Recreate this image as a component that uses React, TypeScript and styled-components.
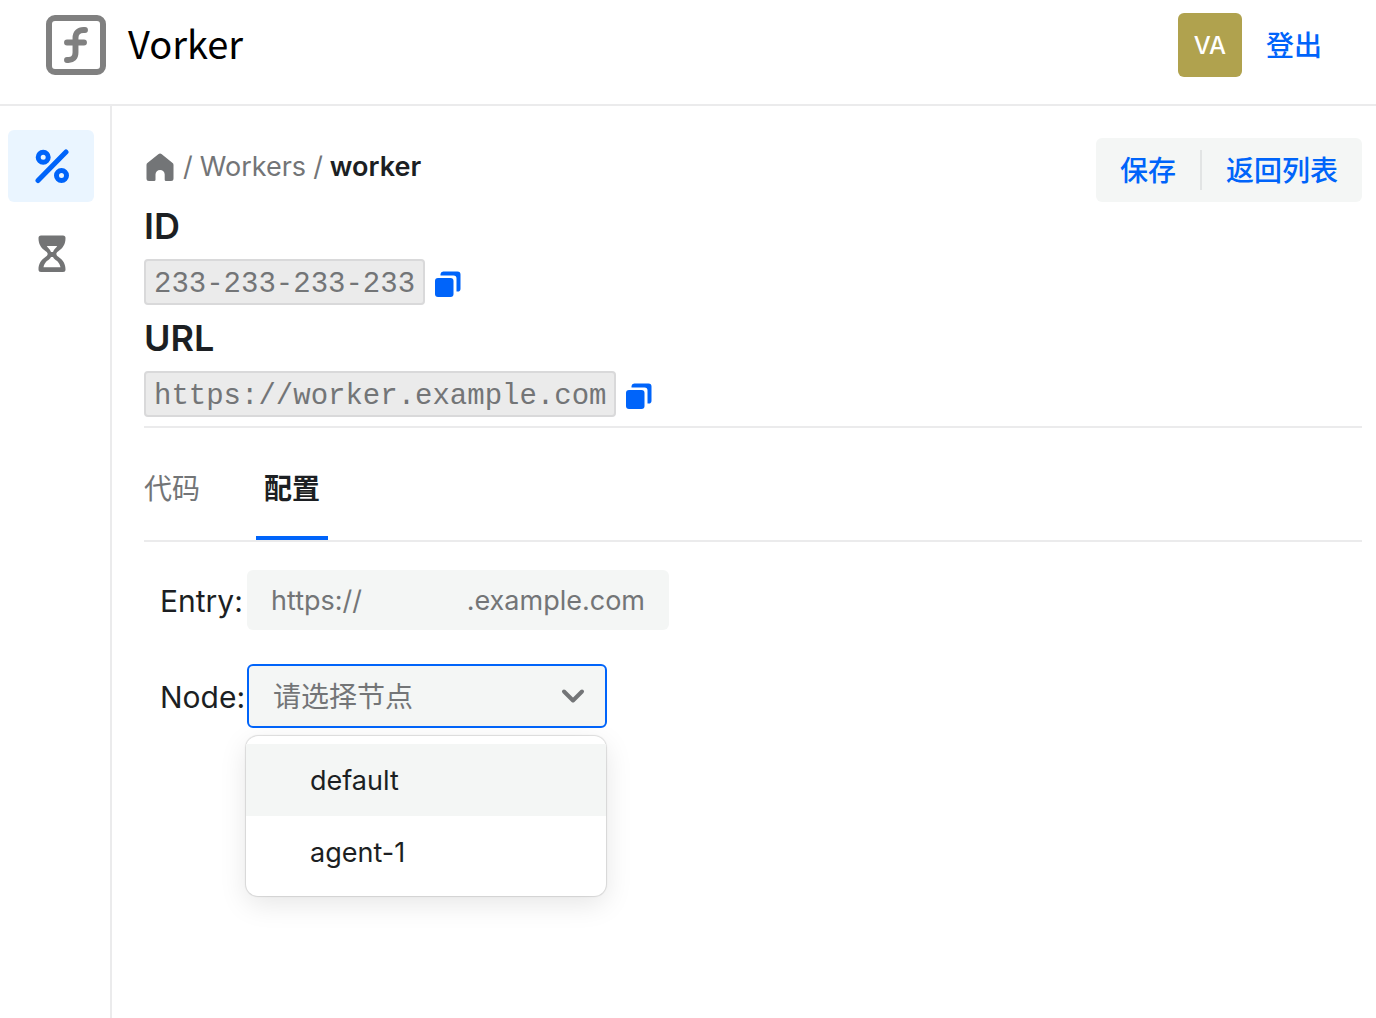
import React, { useState } from "react";
import styled, { createGlobalStyle } from "styled-components";

const color = {
  primary: "#0064fa",
  primarySoft: "#eaf5ff",
  text: "#1c1f23",
  muted: "#737577",
  line: "#ebebec",
  fill: "#f4f6f5",
};

const GlobalStyle = createGlobalStyle`
  * { box-sizing: border-box; }
  body {
    margin: 0;
    background: #fff;
    color: ${color.text};
    font-family: Inter, "Noto Sans CJK SC", sans-serif;
    font-size: 27px;
    line-height: 40px;
  }
  button, input, select { font: inherit; color: inherit; }
  a { color: inherit; text-decoration: none; }
`;

const Page = styled.div`
  display: flex;
  flex-direction: column;
  min-height: 100vh;
`;

const Header = styled.header`
  display: flex;
  align-items: center;
  justify-content: space-between;
  padding: 13px 54px 27px 46px;
  border-bottom: 2px solid ${color.line};
`;

const Brand = styled.a`
  display: flex;
  align-items: center;
  gap: 22px;
  color: #000;
`;

const BrandName = styled.span`
  padding-bottom: 4px;
  font-family: "Noto Sans CJK SC", sans-serif;
  font-size: 38px;
  line-height: 56px;
`;

const Account = styled.div`
  display: flex;
  align-items: center;
  gap: 24px;
`;

const Avatar = styled.span`
  display: grid;
  place-items: center;
  width: 64px;
  height: 64px;
  padding-top: 2px;
  border-radius: 6px;
  background: #b0a24e;
  color: #fff;
  font-size: 24px;
  font-weight: 500;
`;

const TextButton = styled.button<{ $inset?: number }>`
  padding: 13px ${(p) => p.$inset ?? 0}px 11px;
  border: 0;
  background: none;
  color: ${color.primary};
  font-size: 28px;
  font-weight: 500;
  cursor: pointer;
`;

const Body = styled.div`
  display: flex;
  flex: 1;
`;

const Sidebar = styled.nav`
  display: flex;
  flex-direction: column;
  gap: 16px;
  flex: 0 0 112px;
  padding: 24px 16px 24px 8px;
  border-right: 2px solid ${color.line};
`;

const SideLink = styled.a<{ $active?: boolean }>`
  display: grid;
  place-items: center;
  height: 72px;
  padding-left: 2px;
  border-radius: 6px;
  background: ${(p) => (p.$active ? color.primarySoft : "transparent")};
  color: ${(p) => (p.$active ? color.primary : "#737475")};
`;

const Main = styled.main`
  flex: 1;
  min-width: 0;
  padding: 32px 14px 32px 32px;
`;

const TopRow = styled.div`
  display: flex;
  justify-content: space-between;
  height: 64px;
`;

const Breadcrumb = styled.nav`
  display: flex;
  align-items: center;
  gap: 7px;
  height: 58px;
  color: ${color.muted};

  a { display: flex; }
  strong { color: ${color.text}; font-weight: 600; }
`;

const ButtonGroup = styled.div`
  display: flex;
  align-items: center;
  border-radius: 6px;
  background: ${color.fill};
`;

const GroupDivider = styled.span`
  width: 2px;
  height: 40px;
  background: #e2e4e4;
`;

const FieldTitle = styled.h2`
  margin: 0;
  font-size: 36px;
  line-height: 48px;
  font-weight: 600;
`;

const CodeRow = styled.div`
  display: flex;
  align-items: center;
  gap: 8px;
  height: 64px;
`;

const Code = styled.code`
  padding: 6px 8px 0;
  border: 2px solid #d9d9da;
  border-radius: 4px;
  background: #ebebeb;
  color: ${color.muted};
  font-family: "Liberation Mono", monospace;
  font-size: 29px;
  line-height: 36px;
`;

const IconButton = styled.button`
  display: flex;
  padding: 4px 0 0;
  border: 0;
  background: none;
  color: ${color.primary};
  cursor: pointer;
`;

const TabList = styled.div`
  display: flex;
  gap: 48px;
  border-top: 2px solid ${color.line};
  border-bottom: 2px solid ${color.line};
`;

const Tab = styled.button`
  padding: 41px 8px 27px;
  border: 0;
  border-bottom: 4px solid transparent;
  background: none;
  color: ${color.muted};
  font-size: 28px;
  cursor: pointer;

  &:first-child { padding-left: 0; }
  &[aria-selected="true"] {
    border-color: ${color.primary};
    color: ${color.text};
    font-weight: 700;
  }
`;

const Form = styled.form`
  display: grid;
  grid-template-columns: 87px auto;
  justify-content: start;
  align-items: center;
  row-gap: 34px;
  padding: 28px 16px;
`;

const Label = styled.label`
  padding-top: 2px;
  font-size: 30px;
  white-space: nowrap;
`;

const EntryBox = styled.div`
  display: flex;
  align-items: center;
  width: 422px;
  height: 60px;
  padding: 2px 24px 0;
  border-radius: 6px;
  background: ${color.fill};
  color: ${color.muted};

  input {
    flex: 1;
    min-width: 0;
    padding: 0;
    border: 0;
    outline: 0;
    background: none;
    color: ${color.text};
  }
`;

const SelectBox = styled.div`
  position: relative;
  width: 360px;

  > svg {
    position: absolute;
    right: 20px;
    top: 18px;
    color: ${color.muted};
    pointer-events: none;
  }
`;

const NodeSelect = styled.select`
  display: block;
  appearance: none;
  width: 100%;
  height: 64px;
  padding: 2px 60px 0 24px;
  border: 2px solid ${color.primary};
  border-radius: 6px;
  outline: 0;
  background: ${color.fill};
  color: ${color.muted};
  font-size: 28px;
`;

const Menu = styled.div`
  position: absolute;
  top: 72px;
  left: -1px;
  right: 1px;
  padding: 8px 0;
  border-radius: 12px;
  background: #fff;
  box-shadow: 0 0 1px 1px rgba(0, 0, 0, 0.12), 0 8px 28px rgba(0, 0, 0, 0.1);
`;

const Option = styled.button<{ $focused: boolean }>`
  display: block;
  width: 100%;
  padding: 17px 24px 15px 64px;
  border: 0;
  background: ${(p) => (p.$focused ? color.fill : "transparent")};
  text-align: left;
  cursor: pointer;
`;

const LogoIcon = () => (
  <svg width="60" height="60" viewBox="0 0 60 60" fill="none" stroke="#808080" strokeWidth="6" strokeLinecap="round" aria-hidden>
    <rect x="3" y="3" width="54" height="54" rx="6" />
    <path d="M39 15h-1.500c-5 0-8 3-8 8v14.500c0 5-3 7.500-7 7.500h-1.500M21 27.500h17" strokeWidth="5.900" />
  </svg>
);

const PercentIcon = () => (
  <svg width="36" height="36" viewBox="0 0 36 36" fill="none" stroke="currentColor" strokeWidth="5" strokeLinecap="round" aria-hidden>
    <path d="M4 32.500 32 4" />
    <circle cx="9.200" cy="9.200" r="5" />
    <circle cx="27.500" cy="27.500" r="5" />
  </svg>
);

const HourglassIcon = () => (
  <svg width="28" height="38" viewBox="0 0 28 38" fill="currentColor" fillRule="evenodd" aria-hidden>
    <path d="M3 .5h22a2.500 2.500 0 0 1 2.500 2.500c0 6-2.200 9.800-7.500 13.500-2.200 1.500-2.200 3.500 0 5 5.300 3.700 7.500 7.500 7.500 13a2.500 2.500 0 0 1-2.500 2.500H3a2.500 2.500 0 0 1-2.500-2.500c0-5.500 2.200-9.300 7.500-13 2.200-1.500 2.200-3.500 0-5C2.700 12.800.5 9 .5 3A2.500 2.500 0 0 1 3 .5ZM8.800 11h10.400c-.8 1.800-3.200 3-4.200 6h-2c-1-3-3.400-4.200-4.200-6ZM5.500 32.300c.8-4.300 3-6 5.500-7.800 1-.8 1.700-1.500 2-2.500h2c.3 1 1 1.700 2 2.500 2.500 1.800 4.700 3.500 5.500 7.800Z" />
  </svg>
);

const HomeIcon = () => (
  <svg width="32" height="32" viewBox="0 0 32 32" fill="currentColor" aria-hidden>
    <path d="M14.300 3.300a2.800 2.800 0 0 1 3.500 0l10.800 8.800c.6.500.9 1.100.9 1.800v13.600a2.500 2.500 0 0 1-2.500 2.500h-5a1.300 1.300 0 0 1-1.300-1.300V23.500a4.600 4.600 0 0 0-9.200 0v5.200a1.300 1.300 0 0 1-1.300 1.300H5a2.500 2.500 0 0 1-2.500-2.500V13.900c0-.7.300-1.300.9-1.800Z" />
  </svg>
);

const CopyIcon = () => (
  <svg width="30" height="30" viewBox="0 0 30 30" fill="currentColor" aria-hidden>
    <rect x="2" y="9" width="18.500" height="19" rx="3" />
    <path d="M7.500 5A2.800 2.800 0 0 1 10.300 2.500H24.500a3 3 0 0 1 3 3v14.200a2.800 2.800 0 0 1-2.800 2.800H23.500V9.500a3 3 0 0 0-3-3H7.500Z" />
  </svg>
);

const ChevronIcon = () => (
  <svg width="28" height="28" viewBox="0 0 28 28" fill="none" stroke="currentColor" strokeWidth="4" strokeLinecap="round" strokeLinejoin="round" aria-hidden>
    <path d="m5 9.500 9 9 9-9" />
  </svg>
);

const CopyableValue = ({ title, value }: { title: string; value: string }) => (
  <section>
    <FieldTitle>{title}</FieldTitle>
    <CodeRow>
      <Code>{value}</Code>
      <IconButton type="button" aria-label={`Copy ${title}`} onClick={() => navigator.clipboard?.writeText(value)}>
        <CopyIcon />
      </IconButton>
    </CodeRow>
  </section>
);

const nodes = ["default", "agent-1"];

export default function App() {
  const [tab, setTab] = useState("配置");
  const [entry, setEntry] = useState("");
  const [node, setNode] = useState("");
  const [open, setOpen] = useState(true);
  const [focused, setFocused] = useState(nodes[0]);

  return (
    <Page>
      <GlobalStyle />
      <Header>
        <Brand href="#">
          <LogoIcon />
          <BrandName>Vorker</BrandName>
        </Brand>
        <Account>
          <Avatar>VA</Avatar>
          <TextButton type="button">登出</TextButton>
        </Account>
      </Header>
      <Body>
        <Sidebar>
          <SideLink href="#workers" $active aria-label="Workers">
            <PercentIcon />
          </SideLink>
          <SideLink href="#tasks" aria-label="Tasks">
            <HourglassIcon />
          </SideLink>
        </Sidebar>
        <Main>
          <TopRow>
            <Breadcrumb>
              <a href="#" aria-label="Home">
                <HomeIcon />
              </a>
              <span>/</span>
              <a href="#workers">Workers</a>
              <span>/</span>
              <strong>worker</strong>
            </Breadcrumb>
            <ButtonGroup>
              <TextButton type="button" $inset={24}>保存</TextButton>
              <GroupDivider />
              <TextButton type="button" $inset={24}>返回列表</TextButton>
            </ButtonGroup>
          </TopRow>
          <CopyableValue title="ID" value="233-233-233-233" />
          <CopyableValue title="URL" value="https://worker.example.com" />
          <TabList role="tablist">
            {["代码", "配置"].map((name) => (
              <Tab key={name} type="button" role="tab" aria-selected={tab === name} onClick={() => setTab(name)}>
                {name}
              </Tab>
            ))}
          </TabList>
          <Form onSubmit={(e) => e.preventDefault()}>
            <Label htmlFor="entry">Entry:</Label>
            <EntryBox>
              <span>https://</span>
              <input id="entry" value={entry} onChange={(e) => setEntry(e.target.value)} />
              <span>.example.com</span>
            </EntryBox>
            <Label htmlFor="node">Node:</Label>
            <SelectBox>
              <NodeSelect
                id="node"
                value={node}
                onChange={(e) => setNode(e.target.value)}
                onMouseDown={(e) => {
                  e.preventDefault();
                  setOpen(!open);
                }}
              >
                <option value="">请选择节点</option>
                {nodes.map((name) => (
                  <option key={name}>{name}</option>
                ))}
              </NodeSelect>
              <ChevronIcon />
              {open && (
                <Menu role="listbox" aria-label="Node">
                  {nodes.map((name) => (
                    <Option
                      key={name}
                      type="button"
                      role="option"
                      aria-selected={node === name}
                      $focused={focused === name}
                      onMouseEnter={() => setFocused(name)}
                      onClick={() => {
                        setNode(name);
                        setOpen(false);
                      }}
                    >
                      {name}
                    </Option>
                  ))}
                </Menu>
              )}
            </SelectBox>
          </Form>
        </Main>
      </Body>
    </Page>
  );
}
